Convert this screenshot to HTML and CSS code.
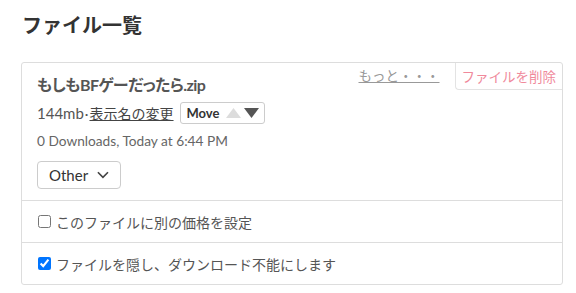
FILE: index.html
```html
<!DOCTYPE html>
<html lang="ja">
<head>
<meta charset="utf-8">
<link rel="stylesheet" href="styles.css">
</head>
<body>
<div class="page">
  <h1 class="title">ファイル一覧</h1>
  <div class="card">
    <div class="card-top">
      <div class="info">
        <div class="filename">もしもBFゲーだったら.zip</div>
        <div class="meta-row">
          <span class="size">144mb</span><span class="dot">·</span><a class="rename">表示名の変更</a>
          <span class="move-btn">
            <span class="move-label">Move</span>
            <svg class="tri" width="15" height="10" viewBox="0 0 15 10"><polygon points="7.5,0 15,10 0,10" fill="#dcdcdc"/></svg>
            <svg class="tri" width="15" height="10" viewBox="0 0 15 10"><polygon points="0,0 15,0 7.5,10" fill="#555"/></svg>
          </span>
        </div>
        <div class="stats">0 Downloads, Today at 6:44 PM</div>
        <div class="select">
          <span class="select-label">Other</span>
          <svg class="chev" width="13" height="8" viewBox="0 0 13 8"><polyline points="1,1 6.5,6.5 12,1" fill="none" stroke="#444" stroke-width="1.8"/></svg>
        </div>
      </div>
      <div class="actions">
        <a class="more">もっと・・・</a>
        <span class="delete">ファイルを削除</span>
      </div>
    </div>
    <label class="check-row"><input type="checkbox"><span>このファイルに別の価格を設定</span></label>
    <label class="check-row"><input type="checkbox" checked><span>ファイルを隠し、ダウンロード不能にします</span></label>
  </div>
</div>
</body>
</html>
```

FILE: styles.css
```css
html, body {
  margin: 0;
  padding: 0;
  background: #fff;
}
body {
  font-family: Lato, "Noto Sans CJK JP", sans-serif;
  color: #555;
}
.page {
  padding: 12px 13px 0 21px;
}
.title {
  margin: 0 0 24px 1px;
  font-family: "Noto Sans CJK JP", sans-serif;
  font-size: 20px;
  line-height: 26px;
  font-weight: 700;
  color: #333;
}
.card {
  border: 1px solid #ddd;
  border-radius: 3px;
}
.card-top {
  display: flex;
  align-items: flex-start;
  border-bottom: 1px solid #ddd;
}
.info {
  flex: 1;
  padding: 10px 0 11px 15px;
}
.filename {
  font-size: 16px;
  line-height: 24px;
  font-weight: 700;
  color: #555;
  letter-spacing: -0.6px;
  font-feature-settings: "palt";
}
.meta-row {
  display: flex;
  align-items: center;
  height: 24px;
  margin-top: 4px;
  font-size: 14px;
  color: #555;
}
.size {
  font-family: Lato, sans-serif;
  font-size: 15px;
}
.dot {
  font-family: Lato, sans-serif;
  font-size: 14px;
  margin: 0 1px;
}
.rename {
  font-family: "Noto Sans CJK JP", sans-serif;
  text-decoration: underline;
  color: #444;
}
.move-btn {
  display: inline-flex;
  align-items: center;
  gap: 3px;
  height: 20px;
  margin-left: 7px;
  padding: 0 5px 0 5px;
  border: 1px solid #ccc;
  border-radius: 3px;
}
.move-label {
  font-size: 13px;
  font-weight: 700;
  color: #333;
  margin-right: 4px;
}
.tri {
  display: block;
}
.stats {
  margin-top: 6px;
  font-size: 13.7px;
  line-height: 20px;
  color: #666;
}
.select {
  display: inline-flex;
  align-items: center;
  gap: 9px;
  box-sizing: border-box;
  width: 84px;
  height: 28px;
  margin-top: 10px;
  padding: 0 11px;
  border: 1px solid #ccc;
  border-radius: 4px;
  font-size: 15px;
  color: #333;
}
.chev {
  display: block;
}
.actions {
  display: flex;
  align-items: flex-start;
  gap: 15px;
}
.more {
  font-family: "Noto Sans CJK JP", sans-serif;
  font-size: 13.5px;
  line-height: 24px;
  color: #999;
  text-decoration: underline;
}
.delete {
  font-family: "Noto Sans CJK JP", sans-serif;
  font-size: 13.5px;
  line-height: 26px;
  color: #f0899b;
  padding: 0 6px;
  border-left: 1px solid #e3e3e3;
  border-bottom: 1px solid #e3e3e3;
  border-bottom-left-radius: 4px;
}
.check-row {
  display: flex;
  align-items: center;
  height: 41px;
  padding-left: 12px;
  font-family: "Noto Sans CJK JP", sans-serif;
  font-size: 14px;
  color: #555;
}
.check-row + .check-row {
  border-top: 1px solid #ddd;
}
.check-row input {
  margin: 0 5px 0 4px;
  width: 13px;
  height: 13px;
}
```
